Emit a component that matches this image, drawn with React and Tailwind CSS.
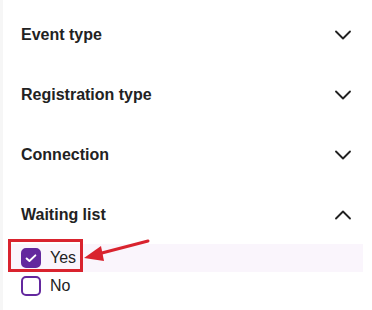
import { ChevronDown, ChevronUp } from 'lucide-react';

const Section = ({ title, open }) => (
  <div className="flex h-[60px] items-center justify-between pl-[18px] pr-[6px]">
    <h3 className="text-[16px] font-bold text-[#222]">{title}</h3>
    {open ? (
      <ChevronUp className="h-[28px] w-[28px] text-[#222]" strokeWidth={1.6} />
    ) : (
      <ChevronDown className="h-[28px] w-[28px] text-[#222]" strokeWidth={1.6} />
    )}
  </div>
);

const Option = ({ label, checked, highlight }) => (
  <div className={`flex h-[28px] items-center gap-[9px] pl-[13px] ${highlight ? 'bg-[#faf5fc]' : ''}`}>
    <span
      className={`flex h-[20px] w-[20px] items-center justify-center rounded-[5px] border-2 border-[#63289e] ${
        checked ? 'bg-[#63289e]' : 'bg-white'
      }`}
    >
      {checked && (
        <svg viewBox="0 0 16 16" className="h-[14px] w-[14px]" fill="none" stroke="white" strokeWidth="2.2" strokeLinecap="round" strokeLinejoin="round">
          <path d="M3 8.5l3.2 3L13 5" />
        </svg>
      )}
    </span>
    <span className="text-[16px] text-[#222]">{label}</span>
  </div>
);

export default function App() {
  return (
    <div className="relative h-[310px] w-[372px] overflow-hidden bg-white font-['Liberation_Sans',Arial,sans-serif]">
      <div className="absolute inset-y-0 left-0 w-[3px] bg-[#f6f6f6]" />
      <div className="pl-[3px] pr-[9px] pt-[5px]">
        <Section title="Event type" />
        <Section title="Registration type" />
        <Section title="Connection" />
        <Section title="Waiting list" open />
        <div className="mt-[-1px] pl-[5px]">
          <Option label="Yes" checked highlight />
          <Option label="No" />
        </div>
      </div>
      {/* annotation */}
      <div className="absolute left-[8px] top-[239px] h-[33px] w-[75px] border-[3px] border-[#d9232e]" />
      <svg className="absolute left-0 top-0" width="372" height="310" viewBox="0 0 372 310">
        <line x1="148" y1="241" x2="98" y2="254" stroke="#d9232e" strokeWidth="3" strokeLinecap="round" />
        <polygon points="84,258 101,246 104,261" fill="#d9232e" />
      </svg>
    </div>
  );
}
